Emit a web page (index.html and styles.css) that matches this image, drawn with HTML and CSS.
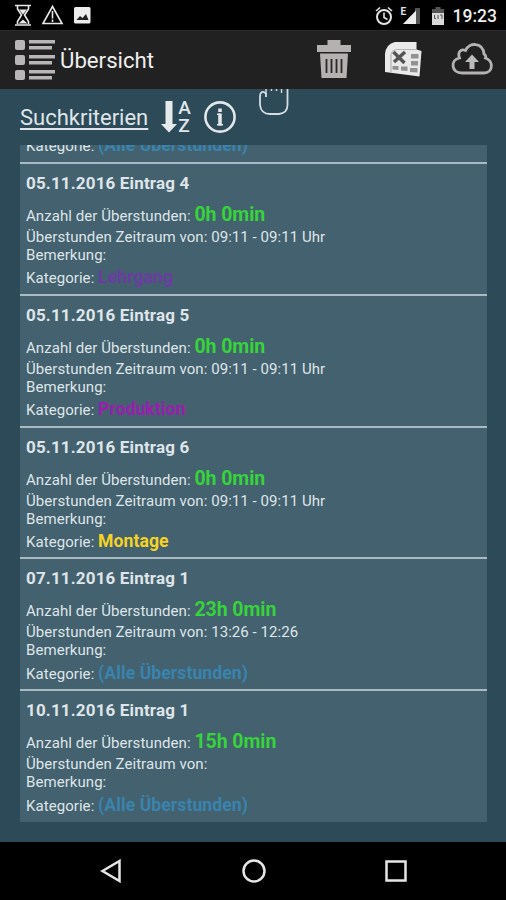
FILE: index.html
```
<!DOCTYPE html>
<html lang="de">
<head>
  <meta charset="utf-8">
  <title>Übersicht</title>
  <link rel="stylesheet" href="styles.css">
</head>
<body>
  <div class="statusbar">
    <svg class="status-left" width="90" height="24" viewBox="0 0 90 24" fill="none" stroke="#e8e8e8" stroke-width="1.6">
      <path d="M0 2.500h16M0 22h16M2.500 3v3l4 6-4 6.500V21M13.500 3v3l-4 6 4 6.500V21"/>
      <path d="M4 6.500h8l-4 5zM3.500 20.500l4.500-4 4.500 4z" fill="#e8e8e8" stroke="none"/>
      <path d="M37.500 3.500l9.500 17h-19zM37.500 8v7.500M37.500 16.500v2.500"/>
      <rect x="59" y="4" width="16.500" height="16.500" rx="1.500" fill="#ededed" stroke="none"/>
      <path d="M61.500 17l3.500-4 2.500 2 3.500-4 2.500 6z" fill="#222" stroke="none"/>
    </svg>
    <div class="status-right">
      <svg width="18" height="20" viewBox="0 0 18 20" fill="none" stroke="#e4e4e4" stroke-width="2">
        <circle cx="9" cy="11" r="7"/>
        <path d="M1 5l4-3.500M17 5l-4-3.500M9 6.500v5l3.500 2" stroke-width="1.600"/>
      </svg>
      <div class="signal">
        <span>E</span>
        <svg width="20" height="20" viewBox="0 0 20 20">
          <path d="M14 2h5v16h-5z" fill="#555"/>
          <path d="M2 18L15 4.500V18z" fill="#ececec"/>
        </svg>
      </div>
      <svg class="battery" width="12" height="18" viewBox="0 0 12 18">
        <path d="M3.500 0h5v2H12v6H0V2h3.500z" fill="#555"/>
        <path d="M0 6h12v12H0z" fill="#d8d8d8"/>
        <path d="M2.500 8v3.500h1.500M6 8v4M8 8h2v4" fill="none" stroke="#555"/>
      </svg>
      <span class="clock">19:23</span>
    </div>
  </div>

  <div class="appbar">
    <svg class="menu" width="42" height="42" viewBox="0 0 42 42" fill="#b8b6b6">
      <rect x="1" y="1" width="10" height="10" rx="2"/>
      <rect x="1" y="16" width="10" height="10" rx="2"/>
      <rect x="1" y="31" width="10" height="10" rx="2"/>
      <path d="M15 1h26v3.500H15zM15 7h23v3.500H15zM15 16h26v3.500H15zM15 22h23v3.500H15zM15 31h26v3.500H15zM15 37h23v3.500H15z"/>
    </svg>
    <h1 class="title">Übersicht</h1>
    <div class="actions">
      <svg width="34" height="38" viewBox="0 0 34 38">
        <path d="M10.500 0h13v5H34v7H0V5h10.500zM3 13.500h28l-1.500 24.500h-25z" fill="#b5b1b1"/>
        <path d="M9.500 19v14M14.500 19v14M19.500 19v14M24.500 19v14" stroke="#282828" stroke-width="1.800"/>
      </svg>
      <svg width="38" height="36" viewBox="0 0 38 36">
        <path d="M11 1h21.500v7.500l5 1.500-2 25.500L1 31V13Q2 3 11 1z" fill="#e9e9e9"/>
        <path d="M7 31V14q1-5 6-5.500h19" fill="none" stroke="#b5b5b5" stroke-width="1.200"/>
        <path d="M9.500 11l11 11M21 11L10 21" stroke="#555" stroke-width="3.500"/>
        <path d="M27 13h7.500v4.500H27zM27 20h7v4.500h-7zM26 27h7.500v4.500L26 31zM17 25.500h6.500v4.500l-6.500-.5zM8.500 25h6v4l-6-.5z" fill="#929292"/>
      </svg>
      <svg class="upload" width="42" height="34" viewBox="0 0 42 34" fill="none" stroke="#b5b2b2" stroke-width="2.800">
        <path d="M11 31C0 31-1 18 8.500 16C6 9 11 7 14.500 8.500C18 0 32 0 33 12C35 13 35 15 34.500 16C43 19 42 31 33 31z"/>
        <path d="M21 12.500l7 7.500h-4.500v7h-5v-7H14z" fill="#bbb" stroke="none"/>
      </svg>
    </div>
  </div>

  <div class="content">
    <div class="toolbar">
      <a class="criteria">Suchkriterien</a>
      <svg width="16" height="32" viewBox="0 0 16 32" fill="#e6eaed">
        <path d="M4.500 0h7v23H16l-8 8.500L0 23h4.500z"/>
      </svg>
      <div class="az"><span>A</span><span>Z</span></div>
      <svg class="info" width="32" height="32" viewBox="0 0 32 32" fill="none" stroke="#e3e7ea">
        <circle cx="16" cy="16" r="14.600" stroke-width="2.600"/>
        <path d="M16 7.500v3.500M16 12.500v12" stroke-width="3.600"/>
        <path d="M13 13.200h3M13 23.800h6" stroke-width="1.400"/>
      </svg>
      <svg class="hand" width="32" height="28" viewBox="0 0 32 28" fill="none" stroke="#d5dde1" stroke-width="1.800">
        <path d="M8 8V5Q7 2.500 4 3Q2 4 2 7V16Q3 25 12 25H21Q29.500 24 29.500 16V0"/>
        <path d="M8 0V6M13.500 0V2M18.500 0V2M23.500 0V4" stroke-width="1.400"/>
      </svg>
    </div>

    <div class="list">
      <div class="entry">
        <div class="row category">Kategorie: <b class="all">(Alle Überstunden)</b></div>
      </div>
      <div class="entry">
        <div class="date">05.11.2016 Eintrag 4</div>
        <div class="row hours">Anzahl der Überstunden: <b>0h 0min</b></div>
        <div class="row">Überstunden Zeitraum von: 09:11 - 09:11 Uhr</div>
        <div class="row">Bemerkung:</div>
        <div class="row category">Kategorie: <b class="lehrgang">Lehrgang</b></div>
      </div>
      <div class="entry">
        <div class="date">05.11.2016 Eintrag 5</div>
        <div class="row hours">Anzahl der Überstunden: <b>0h 0min</b></div>
        <div class="row">Überstunden Zeitraum von: 09:11 - 09:11 Uhr</div>
        <div class="row">Bemerkung:</div>
        <div class="row category">Kategorie: <b class="produktion">Produktion</b></div>
      </div>
      <div class="entry">
        <div class="date">05.11.2016 Eintrag 6</div>
        <div class="row hours">Anzahl der Überstunden: <b>0h 0min</b></div>
        <div class="row">Überstunden Zeitraum von: 09:11 - 09:11 Uhr</div>
        <div class="row">Bemerkung:</div>
        <div class="row category">Kategorie: <b class="montage">Montage</b></div>
      </div>
      <div class="entry">
        <div class="date">07.11.2016 Eintrag 1</div>
        <div class="row hours">Anzahl der Überstunden: <b>23h 0min</b></div>
        <div class="row">Überstunden Zeitraum von: 13:26 - 12:26</div>
        <div class="row">Bemerkung:</div>
        <div class="row category">Kategorie: <b class="all">(Alle Überstunden)</b></div>
      </div>
      <div class="entry">
        <div class="date">10.11.2016 Eintrag 1</div>
        <div class="row hours">Anzahl der Überstunden: <b>15h 0min</b></div>
        <div class="row">Überstunden Zeitraum von:</div>
        <div class="row">Bemerkung:</div>
        <div class="row category">Kategorie: <b class="all">(Alle Überstunden)</b></div>
      </div>
    </div>
  </div>

  <div class="navbar">
    <svg width="22" height="24" viewBox="0 0 22 24"><path d="M2.500 12L19.500 2v20z"/></svg>
    <svg width="24" height="24" viewBox="0 0 24 24"><circle cx="12" cy="12" r="10.500"/></svg>
    <svg width="22" height="22" viewBox="0 0 22 22"><rect x="1.500" y="1.500" width="19" height="19"/></svg>
  </div>
</body>
</html>
```
FILE: styles.css
```
* {
  box-sizing: border-box;
}

body {
  margin: 0;
  width: 506px;
  height: 900px;
  display: flex;
  flex-direction: column;
  overflow: hidden;
  background: #000;
  color: #dfe5e9;
  font-family: Roboto, "Liberation Sans", sans-serif;
}

svg {
  display: block;
  flex: none;
}

/* status bar */
.statusbar {
  height: 30px;
  padding: 3px 9px 0 15px;
  display: flex;
  justify-content: space-between;
}

.status-right {
  display: flex;
  align-items: center;
  height: 25px;
}

.signal {
  display: flex;
  margin-left: 8px;
}

.signal span {
  font-size: 10px;
  font-weight: bold;
  line-height: 12px;
  width: 6px;
  margin-right: -6px;
}

.battery {
  margin-left: 11px;
}

.clock {
  margin-left: 9px;
  font-size: 17.5px;
  font-weight: 500;
  color: #eee;
}

/* title bar */
.appbar {
  height: 59px;
  padding: 0 13px 0 14px;
  display: flex;
  align-items: center;
  background: #212121;
  border-top: 1px solid #2b2b2b;
}

.title {
  margin: 0 0 0 4px;
  font-size: 22.2px;
  font-weight: normal;
  color: #eee;
}

.actions {
  margin-left: auto;
  padding-bottom: 3px;
  display: flex;
  align-items: center;
  gap: 33px;
}

.upload {
  margin-left: -4px;
}

/* content */
.content {
  height: 753px;
  padding: 0 19px 20px 20px;
  display: flex;
  flex-direction: column;
  background: #2d4a58;
}

.toolbar {
  height: 56px;
  display: flex;
  align-items: center;
}

.criteria {
  font-size: 22px;
  text-decoration: underline;
  text-underline-offset: 3px;
  margin-right: 13px;
}

.az {
  display: flex;
  flex-direction: column;
  width: 13px;
  font-size: 19px;
  font-weight: 500;
  line-height: 18px;
  margin-left: 1px;
}

.info {
  margin-left: 13px;
}

.hand {
  align-self: flex-start;
  margin-left: 22px;
}

.list {
  height: 677px;
  padding-bottom: 1px;
  overflow: hidden;
  display: flex;
  flex-direction: column;
  justify-content: flex-end;
  background: #43616e;
}

.entry {
  flex: none;
  height: 131.8px;
  padding: 8px 6px 0;
  border-top: 2px solid #a9bac2;
}

/* scrolled partly out of the list */
.entry:first-child {
  height: 30px;
  padding-top: 0;
  border-top: 0;
}

.date {
  font-size: 17px;
  font-weight: bold;
  line-height: 22px;
  letter-spacing: 0.16px;
  margin-bottom: 9px;
}

.row {
  font-size: 15px;
  line-height: 18px;
  letter-spacing: 0.06px;
}

.hours {
  line-height: 24px;
}

.hours b {
  font-size: 19.5px;
  letter-spacing: -0.05px;
  color: #36d43a;
}

.category {
  line-height: 22px;
  margin-top: 2.4px;
}

.category b {
  font-size: 17.6px;
}

.all {
  color: #3984ae;
}

.lehrgang {
  color: #6c3ba3;
}

.produktion {
  color: #9d1cb0;
}

.montage {
  color: #f6d324;
}

/* navigation keys */
.navbar {
  flex: 1;
  padding: 0 99px 0 100px;
  display: flex;
  align-items: center;
  justify-content: space-between;
}

.navbar svg {
  fill: none;
  stroke: #e6e6e6;
  stroke-width: 2.5;
}
```
